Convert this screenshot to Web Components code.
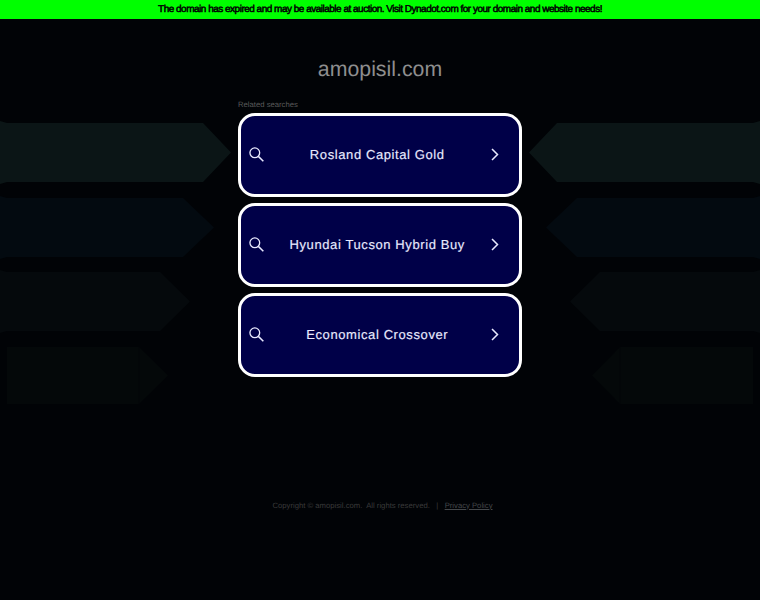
<!DOCTYPE html>
<html>
<head>
<meta charset="utf-8">
<title>amopisil.com</title>
<style>
   html, body { margin: 0; padding: 0; height: 100%; background: #010306; overflow: hidden; }
   body { font-family: "Liberation Sans", Arial, sans-serif; text-rendering: geometricPrecision; }
</style>
</head>
<body>
<expired-bar>The domain has expired and may be available at auction. Visit Dynadot.com for your domain and website needs!</expired-bar>
<bg-arrows></bg-arrows>
<parked-page domain="amopisil.com">
   <search-link>Rosland Capital Gold</search-link>
   <search-link>Hyundai Tucson Hybrid Buy</search-link>
   <search-link>Economical Crossover</search-link>
</parked-page>
<script>
class ExpiredBar extends HTMLElement {
   constructor() {
      super();
      this.attachShadow({ mode: 'open' });
      this.shadowRoot.innerHTML = `
         <style>
            :host {
               display: block;
               height: 19px;
               background: #00ff00;
               color: #000;
               text-align: center;
               white-space: nowrap;
               font: 10px/20px "Liberation Sans", Arial, sans-serif;
               letter-spacing: -0.5px;
               -webkit-text-stroke: 0.5px #000;
            }
         </style>
         <slot></slot>`;
   }
}
customElements.define('expired-bar', ExpiredBar);

// decoration behind the cards, pointing in at them from both sides
const arrows = [
   { top: 123, h: 59, tip: 231, shoulder: 203, start: 7, edge: 0, tail: 2, fill: '#0b1516' },
   { top: 198, h: 59, tip: 214, shoulder: 183, start: 7, edge: 0, tail: 2, fill: '#030a10' },
   { top: 272, h: 59, tip: 190, shoulder: 160, start: 7, edge: 0, tail: 2, fill: '#05090c' },
   { top: 347, h: 57, tip: 168, shoulder: 139, start: 7, edge: 7, tail: 0, fill: '#040809', line: true },
   { top: 123, h: 59, tip: 529, shoulder: 557, start: 753, edge: 760, tail: 2, fill: '#0b1516' },
   { top: 198, h: 59, tip: 546, shoulder: 577, start: 753, edge: 760, tail: 2, fill: '#030a10' },
   { top: 272, h: 59, tip: 570, shoulder: 600, start: 753, edge: 760, tail: 2, fill: '#05090c' },
   { top: 347, h: 57, tip: 592, shoulder: 620, start: 753, edge: 753, tail: 0, fill: '#040809', line: true },
];

class BgArrows extends HTMLElement {
   constructor() {
      super();
      this.attachShadow({ mode: 'open' });
      const polys = arrows.map(a => {
         const mid = a.top + a.h / 2, bottom = a.top + a.h;
         let out = `<polygon fill="${a.fill}" points="${a.edge},${a.top - a.tail} ${a.start},${a.top} ${a.shoulder},${a.top} ${a.tip},${mid} ${a.shoulder},${bottom} ${a.start},${bottom} ${a.edge},${bottom + a.tail}"/>`;
         if (a.line) out += `<path d="M${a.shoulder} ${a.top}V${bottom}" stroke="#020508" stroke-width="1"/>`;
         return out;
      }).join('');
      this.shadowRoot.innerHTML = `
         <style>
            :host { display: block; position: absolute; left: 0; top: 0; width: 760px; height: 600px; z-index: 0; }
            svg { display: block; }
         </style>
         <svg width="760" height="600" viewBox="0 0 760 600">${polys}</svg>`;
   }
}
customElements.define('bg-arrows', BgArrows);

class SearchLink extends HTMLElement {
   constructor() {
      super();
      this.attachShadow({ mode: 'open' });
      this.shadowRoot.innerHTML = `
         <style>
            :host {
               display: flex;
               align-items: center;
               box-sizing: border-box;
               width: 284px;
               height: 83.5px;
               padding: 0 20px 1px 7.5px;
               background: #000048;
               border: 3px solid #fff;
               border-radius: 17px;
               color: #e9eaff;
            }
            svg { flex: none; display: block; }
            span {
               flex: 1;
               text-align: center;
               font: 13px "Liberation Sans", Arial, sans-serif;
               letter-spacing: 0.6px;
               -webkit-text-stroke: 0.15px #e9eaff;
            }
         </style>
         <svg width="15" height="15" viewBox="0 0 16 16" fill="none" stroke="#e9eaff" stroke-width="1.4">
            <circle cx="6.2" cy="6.2" r="5.2"/>
            <path d="M10 10 15.3 15.3" stroke-width="1.6"/>
         </svg>
         <span><slot></slot></span>
         <svg width="8" height="13" viewBox="0 0 8 13" fill="none" stroke="#e9eaff" stroke-width="1.5">
            <path d="M1 1 6.5 6.5 1 12"/>
         </svg>`;
   }
}
customElements.define('search-link', SearchLink);

class ParkedPage extends HTMLElement {
   constructor() {
      super();
      this.attachShadow({ mode: 'open' });
      const domain = this.getAttribute('domain');
      this.shadowRoot.innerHTML = `
         <style>
            :host {
               display: flex;
               flex-direction: column;
               align-items: center;
               position: relative;
               z-index: 1;
               font-family: "Liberation Sans", Arial, sans-serif;
            }
            h1 {
               margin: 37px 0 0;
               font-size: 21.3px;
               line-height: 26px;
               font-weight: normal;
               color: #8e8e8e;
            }
            .label {
               width: 284px;
               margin-top: 18px;
               font-size: 7.7px;
               line-height: 10px;
               color: #5a5a5a;
            }
            .list {
               display: flex;
               flex-direction: column;
               gap: 6.5px;
               margin-top: 3px;
            }
            footer {
               margin: 123px 0 0 5px;
               font-size: 7.7px;
               line-height: 11px;
               color: #3a3a3a;
               white-space: pre;
            }
            a { color: #44474a; text-decoration: underline; }
         </style>
         <h1>${domain}</h1>
         <div class="label">Related searches</div>
         <div class="list"><slot></slot></div>
         <footer>Copyright © ${domain}.  All rights reserved.   |   <a href="#">Privacy Policy</a></footer>`;
   }
}
customElements.define('parked-page', ParkedPage);
</script>
</body>
</html>
